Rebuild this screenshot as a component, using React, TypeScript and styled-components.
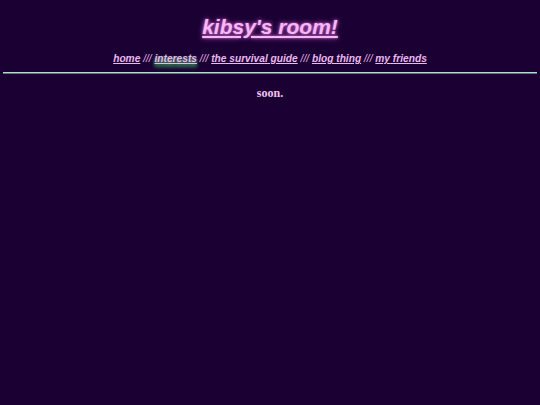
import React from "react";
import styled, { createGlobalStyle } from "styled-components";

const Global = createGlobalStyle`
  html, body { margin: 0; padding: 0; background: #1a0033; }
  body { font-family: "Liberation Serif", "Times New Roman", serif; color: #f2c6f2; }
`;

const Page = styled.div`
  display: flex;
  flex-direction: column;
  align-items: center;
  padding-top: 14px;
`;

const Title = styled.h1`
  margin: 0;
  font-family: "Liberation Sans", Arial, sans-serif;
  font-size: 21px;
  font-weight: bold;
  font-style: italic;
  line-height: 26px;
  color: #f4b8f4;
  text-decoration: underline;
  text-shadow: 0 0 5px #d060d0, 0 0 2px #b050b0;
`;

const Nav = styled.nav`
  margin-top: 12px;
  font-family: "Liberation Sans", Arial, sans-serif;
  font-size: 10.2px;
  font-weight: bold;
  font-style: italic;
  line-height: 14px;
  color: #eab8f0;
`;

const NavLink = styled.a<{ $active?: boolean }>`
  color: #eab8f0;
  text-decoration: underline;
  cursor: pointer;
  text-shadow: ${(p) => (p.$active ? "0 3px 4px #3fa060, 0 2px 3px #3a9a55" : "none")};
`;

const Sep = styled.span`
  font-weight: normal;
`;

const Rule = styled.hr`
  width: 99%;
  margin: 6px 0 0;
  height: 0;
  border: none;
  border-top: 1px solid #a0e8c4;
  border-bottom: 1px solid #6a6a80;
`;

const Soon = styled.p`
  margin: 12px 0 0;
  font-size: 12px;
  font-weight: bold;
  color: #f2c6f2;
`;

const links = ["home", "interests", "the survival guide", "blog thing", "my friends"];

export default function App() {
  return (
    <>
      <Global />
      <Page>
        <Title>kibsy's room!</Title>
        <Nav>
          {links.map((l, i) => (
            <React.Fragment key={l}>
              {i > 0 && <Sep> /// </Sep>}
              <NavLink $active={l === "interests"}>{l}</NavLink>
            </React.Fragment>
          ))}
        </Nav>
        <Rule />
        <Soon>soon.</Soon>
      </Page>
    </>
  );
}
